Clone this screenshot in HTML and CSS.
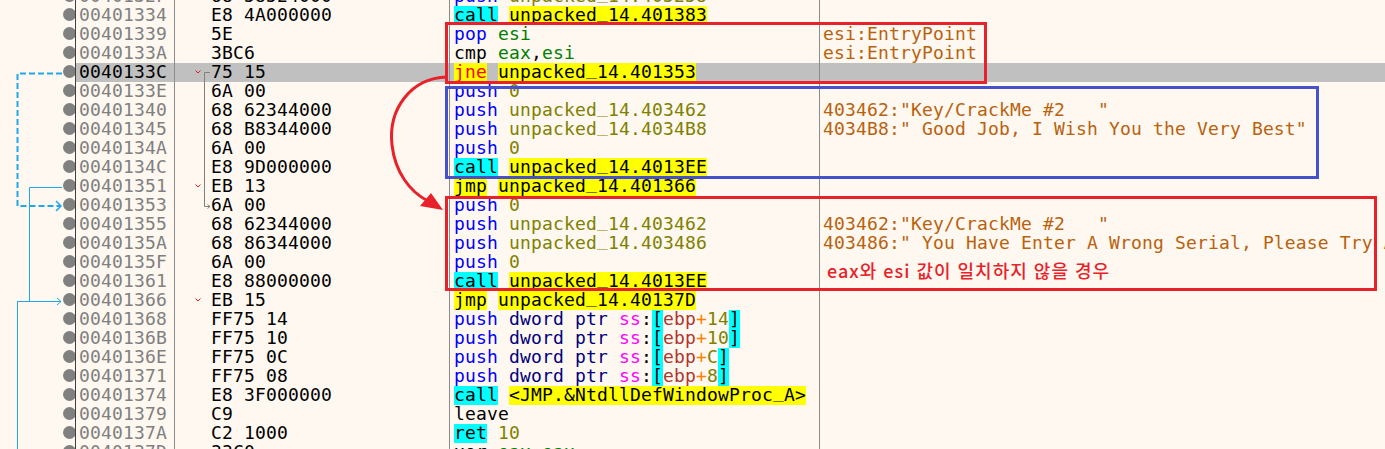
FILE: index.html
```html
<!DOCTYPE html>
<html lang="ko">
<head>
    <meta charset="UTF-8">
    <title>Disassembly</title>
    <link rel="stylesheet" href="styles.css">
</head>
<body>

<div class="view">
    <div class="rows">
        <div class="row"><span class="gut"></span><span class="bp"></span><span class="addr">0040132F</span><span class="bytes">68 58524000</span><span class="code"><span class="mn">push</span> <span class="imm">unpacked<span class="us">_</span>14.405258</span></span><span class="cmt"></span></div>
        <div class="row"><span class="gut"></span><span class="bp"></span><span class="addr">00401334</span><span class="bytes">E8 4A000000</span><span class="code"><span class="hl call">call</span> <span class="hl lbl">unpacked<span class="us">_</span>14.401383</span></span><span class="cmt"></span></div>
        <div class="row"><span class="gut"></span><span class="bp"></span><span class="addr">00401339</span><span class="bytes">5E</span><span class="code"><span class="mn">pop</span> <span class="reg">esi</span></span><span class="cmt">esi:EntryPoint</span></div>
        <div class="row"><span class="gut"></span><span class="bp"></span><span class="addr">0040133A</span><span class="bytes">3BC6</span><span class="code">cmp <span class="reg">eax</span>,<span class="reg">esi</span></span><span class="cmt">esi:EntryPoint</span></div>
        <div class="row sel"><span class="gut"></span><span class="bp"></span><span class="addr">0040133C</span><span class="bytes">75 15</span><span class="code"><span class="hl jcc">jne</span> <span class="hl lbl">unpacked<span class="us">_</span>14.401353</span></span><span class="cmt"></span></div>
        <div class="row"><span class="gut"></span><span class="bp"></span><span class="addr">0040133E</span><span class="bytes">6A 00</span><span class="code"><span class="mn">push</span> <span class="imm">0</span></span><span class="cmt"></span></div>
        <div class="row"><span class="gut"></span><span class="bp"></span><span class="addr">00401340</span><span class="bytes">68 62344000</span><span class="code"><span class="mn">push</span> <span class="imm">unpacked<span class="us">_</span>14.403462</span></span><span class="cmt">403462:"Key/CrackMe #2   "</span></div>
        <div class="row"><span class="gut"></span><span class="bp"></span><span class="addr">00401345</span><span class="bytes">68 B8344000</span><span class="code"><span class="mn">push</span> <span class="imm">unpacked<span class="us">_</span>14.4034B8</span></span><span class="cmt">4034B8:" Good Job, I Wish You the Very Best"</span></div>
        <div class="row"><span class="gut"></span><span class="bp"></span><span class="addr">0040134A</span><span class="bytes">6A 00</span><span class="code"><span class="mn">push</span> <span class="imm">0</span></span><span class="cmt"></span></div>
        <div class="row"><span class="gut"></span><span class="bp"></span><span class="addr">0040134C</span><span class="bytes">E8 9D000000</span><span class="code"><span class="hl call">call</span> <span class="hl lbl">unpacked<span class="us">_</span>14.4013EE</span></span><span class="cmt"></span></div>
        <div class="row"><span class="gut"></span><span class="bp"></span><span class="addr">00401351</span><span class="bytes">EB 13</span><span class="code"><span class="hl jmp">jmp</span> <span class="hl lbl">unpacked<span class="us">_</span>14.401366</span></span><span class="cmt"></span></div>
        <div class="row"><span class="gut"></span><span class="bp"></span><span class="addr">00401353</span><span class="bytes">6A 00</span><span class="code"><span class="mn">push</span> <span class="imm">0</span></span><span class="cmt"></span></div>
        <div class="row"><span class="gut"></span><span class="bp"></span><span class="addr">00401355</span><span class="bytes">68 62344000</span><span class="code"><span class="mn">push</span> <span class="imm">unpacked<span class="us">_</span>14.403462</span></span><span class="cmt">403462:"Key/CrackMe #2   "</span></div>
        <div class="row"><span class="gut"></span><span class="bp"></span><span class="addr">0040135A</span><span class="bytes">68 86344000</span><span class="code"><span class="mn">push</span> <span class="imm">unpacked<span class="us">_</span>14.403486</span></span><span class="cmt">403486:" You Have Enter A Wrong Serial, Please Try Again"</span></div>
        <div class="row"><span class="gut"></span><span class="bp"></span><span class="addr">0040135F</span><span class="bytes">6A 00</span><span class="code"><span class="mn">push</span> <span class="imm">0</span></span><span class="cmt"></span></div>
        <div class="row"><span class="gut"></span><span class="bp"></span><span class="addr">00401361</span><span class="bytes">E8 88000000</span><span class="code"><span class="hl call">call</span> <span class="hl lbl">unpacked<span class="us">_</span>14.4013EE</span></span><span class="cmt"></span></div>
        <div class="row"><span class="gut"></span><span class="bp"></span><span class="addr">00401366</span><span class="bytes">EB 15</span><span class="code"><span class="hl jmp">jmp</span> <span class="hl lbl">unpacked<span class="us">_</span>14.40137D</span></span><span class="cmt"></span></div>
        <div class="row"><span class="gut"></span><span class="bp"></span><span class="addr">00401368</span><span class="bytes">FF75 14</span><span class="code"><span class="mn">push</span> <span class="ptr">dword ptr</span> <span class="seg">ss</span>:<span class="hl brk">[</span><span class="mreg">ebp</span><span class="plus">+</span><span class="imm">14</span><span class="hl brk">]</span></span><span class="cmt"></span></div>
        <div class="row"><span class="gut"></span><span class="bp"></span><span class="addr">0040136B</span><span class="bytes">FF75 10</span><span class="code"><span class="mn">push</span> <span class="ptr">dword ptr</span> <span class="seg">ss</span>:<span class="hl brk">[</span><span class="mreg">ebp</span><span class="plus">+</span><span class="imm">10</span><span class="hl brk">]</span></span><span class="cmt"></span></div>
        <div class="row"><span class="gut"></span><span class="bp"></span><span class="addr">0040136E</span><span class="bytes">FF75 0C</span><span class="code"><span class="mn">push</span> <span class="ptr">dword ptr</span> <span class="seg">ss</span>:<span class="hl brk">[</span><span class="mreg">ebp</span><span class="plus">+</span><span class="imm">C</span><span class="hl brk">]</span></span><span class="cmt"></span></div>
        <div class="row"><span class="gut"></span><span class="bp"></span><span class="addr">00401371</span><span class="bytes">FF75 08</span><span class="code"><span class="mn">push</span> <span class="ptr">dword ptr</span> <span class="seg">ss</span>:<span class="hl brk">[</span><span class="mreg">ebp</span><span class="plus">+</span><span class="imm">8</span><span class="hl brk">]</span></span><span class="cmt"></span></div>
        <div class="row"><span class="gut"></span><span class="bp"></span><span class="addr">00401374</span><span class="bytes">E8 3F000000</span><span class="code"><span class="hl call">call</span> <span class="hl lbl">&lt;JMP.&amp;NtdllDefWindowProc<span class="us">_</span>A&gt;</span></span><span class="cmt"></span></div>
        <div class="row"><span class="gut"></span><span class="bp"></span><span class="addr">00401379</span><span class="bytes">C9</span><span class="code">leave</span><span class="cmt"></span></div>
        <div class="row"><span class="gut"></span><span class="bp"></span><span class="addr">0040137A</span><span class="bytes">C2 1000</span><span class="code"><span class="hl call">ret</span> <span class="imm">10</span></span><span class="cmt"></span></div>
        <div class="row"><span class="gut"></span><span class="bp"></span><span class="addr">0040137D</span><span class="bytes">33C0</span><span class="code">xor <span class="reg">eax</span>,<span class="reg">eax</span></span><span class="cmt"></span></div>
    </div>

    <!-- jump arrows in the gutter and the bytes column -->
    <svg class="flow" width="1385" height="449" viewBox="0 0 1385 449">
        <g fill="none" stroke="#1ea8ec">
            <path d="M62 73.5 H17.5 V206 H61" stroke-width="2" stroke-dasharray="6 3"/>
            <path d="M56 201 L61 206 L56 211" stroke-width="1.5"/>
            <path d="M62 187.5 H29.5 V301.5" stroke-width="1"/>
            <path d="M17.5 449 V301.5 H61" stroke-width="1"/>
            <path d="M57 298 L61 301.5 L57 305" stroke-width="1"/>
        </g>
        <g fill="none" stroke="#808080" stroke-width="1">
            <path d="M210 72.5 H204.5 V206.5 H210"/>
            <path d="M207.5 204.5 L210 206.5 L207.5 208.5"/>
        </g>
        <g fill="none" stroke="#e02020" stroke-width="1">
            <path d="M195.5 70.5 L198 73 L200.5 70.5"/>
            <path d="M195.5 184.5 L198 187 L200.5 184.5"/>
            <path d="M195.5 298.5 L198 301 L200.5 298.5"/>
        </g>
    </svg>

    <!-- annotations -->
    <div class="box box-red box-cmp"></div>
    <div class="box box-blue box-ok"></div>
    <div class="box box-red box-bad"></div>
    <svg class="flow" width="1385" height="449" viewBox="0 0 1385 449">
        <path d="M447 77 C410 78 388 110 392 145 C395 172 410 192 428 201" fill="none" stroke="#e8222a" stroke-width="3"/>
        <path d="M443 210 L420 206 L431 193 Z" fill="#e8222a"/>
    </svg>
    <div class="note">eax와 esi 값이 일치하지 않을 경우</div>
</div>

</body>
</html>
```

FILE: styles.css
```css
body {
    margin: 0;
    background: #fff8f0;
    overflow: hidden;
    font-family: "DejaVu Sans Mono", "Liberation Mono", monospace;
    font-size: 18px;
    letter-spacing: 0.16px;
    color: #000;
}
.view {
    position: relative;
    height: 449px;
    overflow: hidden;
}
.rows {
    margin-top: -13px;
}
.row {
    display: grid;
    grid-template-columns: 63px 13px 99px 275px 370px 1fr;
    height: 19px;
    line-height: 17px;
    white-space: pre;
}
.bp {
    border-right: 1px solid #404040;
    overflow: hidden;
}
.bp::before {
    content: "";
    display: block;
    width: 13px;
    height: 13px;
    margin-top: 2px;
    border-radius: 50%;
    background: #808080;
}
.addr {
    padding-left: 3px;
    color: #808080;
    border-right: 1px solid #8c8c8c;
}
.bytes {
    padding-left: 36px;
    border-right: 1px solid #8c8c8c;
}
.code {
    padding-left: 4px;
    border-right: 1px solid #8c8c8c;
}
.cmt {
    padding-left: 3px;
    color: #b8620e;
    overflow: hidden;
}
.row.sel .addr, .row.sel .bytes, .row.sel .code, .row.sel .cmt {
    background: #c0c0c0;
}
.row.sel .addr {
    color: #000;
}

/* instruction tokens */
.hl {
    display: inline-block;
    height: 19px;
    vertical-align: top;
}
.us {
    line-height: 0;
    vertical-align: 3px;
}
.mn { color: #0000ff; }
.call { background: #00ffff; }
.jcc { background: #ffff00; color: #ff0000; }
.jmp { background: #ffff00; }
.lbl { background: #ffff00; }
.imm { color: #808000; }
.reg { color: #008000; }
.ptr { color: #000080; }
.seg { color: #ff00ff; }
.brk { background: #00ffff; }
.mreg { color: #b0352c; }
.plus { color: #ff8000; }

/* overlays */
.flow {
    position: absolute;
    top: 0;
    left: 0;
    pointer-events: none;
}
.box {
    position: absolute;
    box-sizing: border-box;
    border: 3px solid #e8222a;
}
.box-blue {
    border-color: #4652cc;
}
.box-cmp {
    left: 445px;
    top: 22px;
    width: 542px;
    height: 62px;
}
.box-ok {
    left: 445px;
    top: 86px;
    width: 874px;
    height: 93px;
}
.box-bad {
    left: 445px;
    top: 196px;
    width: 932px;
    height: 95px;
}
.note {
    position: absolute;
    left: 827px;
    top: 257px;
    font-family: "Noto Sans CJK KR", sans-serif;
    font-size: 18px;
    font-weight: 500;
    line-height: 26px;
    letter-spacing: 1px;
    color: #e8222a;
}
```
